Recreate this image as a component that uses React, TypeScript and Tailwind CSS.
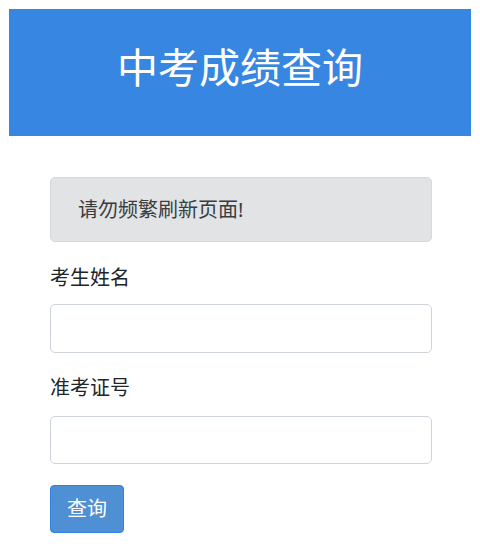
import React from 'react'

const font = { fontFamily: '"Noto Sans", "Noto Sans CJK SC", sans-serif' }

export default function App(): React.JSX.Element {
  return (
    <div className="w-[480px] h-[546px] bg-white p-[9px]" style={font}>
      <header className="h-[127px] pb-[10px] bg-[#3686e2] flex items-center justify-center">
        <h1 className="text-[41px] leading-none text-white">中考成绩查询</h1>
      </header>

      <form className="w-[382px] ml-[41px] mt-[41px] flex flex-col" onSubmit={e => e.preventDefault()}>
        <div className="h-[65px] flex items-center pl-[27px] bg-[#e2e3e5] border border-[#d6d8db] rounded-[5px] text-[20px] text-[#383d41]">
          请勿频繁刷新页面!
        </div>

        <label className="mt-[22px] text-[20px] leading-[28px] text-[#212529]">考生姓名</label>
        <input className="mt-[12px] h-[49px] border border-[#ced4da] rounded-[5px] px-3 outline-none" />

        <label className="mt-[21px] text-[20px] leading-[28px] text-[#212529]">准考证号</label>
        <input className="mt-[14px] h-[48px] border border-[#ced4da] rounded-[5px] px-3 outline-none" />

        <div className="mt-[21px]">
          <button
            type="submit"
            className="w-[74px] h-[48px] bg-[#4f8fd4] border border-[#2f80e0] rounded-[4px] text-white text-[20px]"
          >
            查询
          </button>
        </div>
      </form>
    </div>
  )
}
